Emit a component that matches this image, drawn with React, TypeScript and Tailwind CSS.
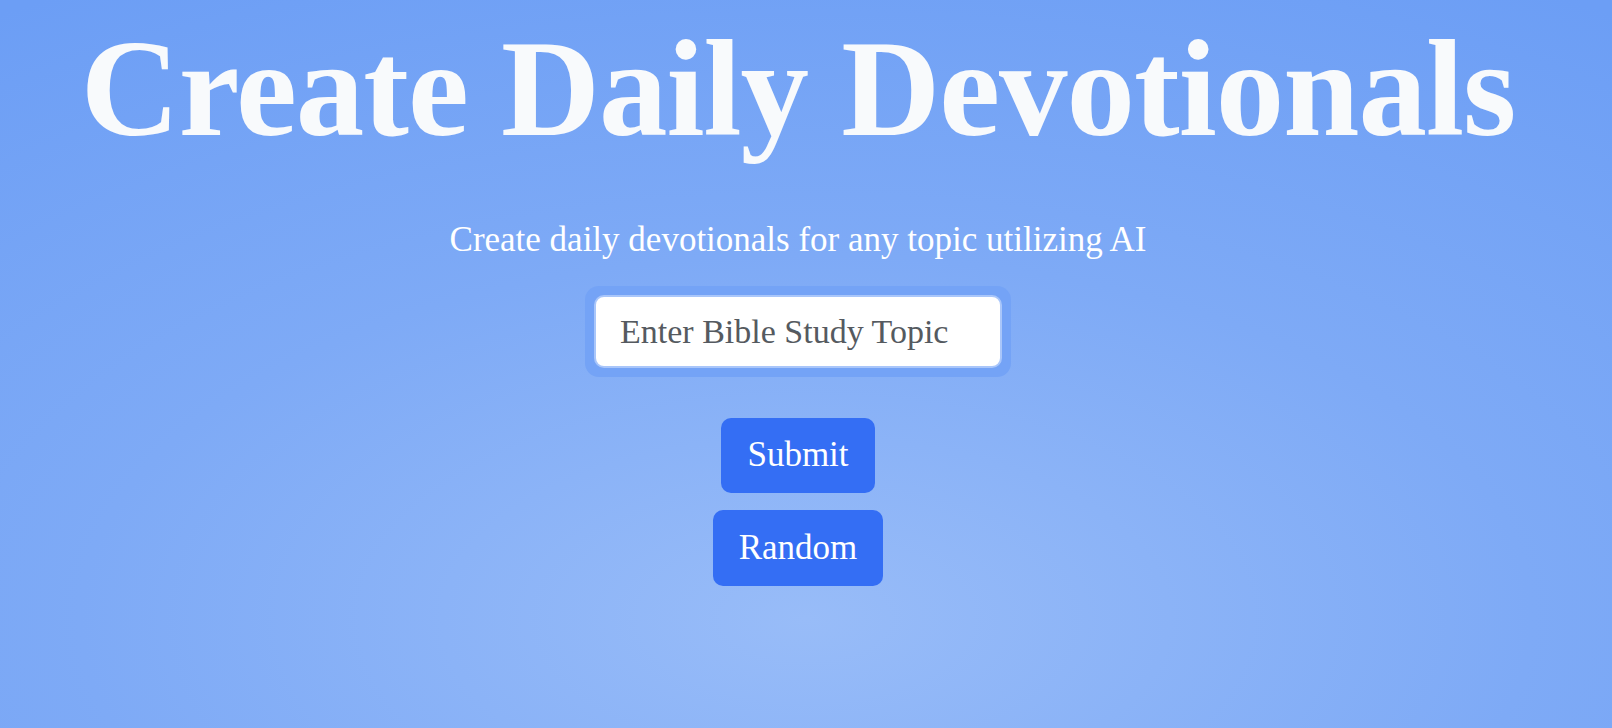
import { useState } from "react";

export default function App() {
  const [topic, setTopic] = useState("");

  return (
    <div className="min-h-screen w-full bg-[radial-gradient(ellipse_90%_100%_at_50%_85%,#98bcf8_0%,#7eaaf6_50%,#6c9ef5_100%)] font-['Liberation_Serif',serif]">
      <div className="flex flex-col items-center pr-[16px]">
        <h1 className="mt-[9px] text-[137px] leading-[160px] font-bold tracking-[-1px] text-[#f8fafc]">
          Create Daily Devotionals
        </h1>
        <p className="mt-[51px] text-[35px] leading-[40px] text-white">
          Create daily devotionals for any topic utilizing AI
        </p>
        <div className="mt-[26px] rounded-[14px] bg-[#74a3f6] p-[9px]">
          <input
            autoFocus
            value={topic}
            onChange={(e) => setTopic(e.target.value)}
            placeholder="Enter Bible Study Topic"
            className="h-[73px] w-[408px] rounded-[10px] border-2 border-[#a9c6fa] bg-white px-[24px] text-[34px] text-[#555] caret-black outline-none placeholder:text-[#555a60]"
          />
        </div>
        <button className="mt-[41px] h-[75px] rounded-[10px] bg-[#346ef4] px-[26px] text-[35px] text-white">
          Submit
        </button>
        <button className="mt-[17px] h-[76px] rounded-[10px] bg-[#346ef4] px-[26px] text-[35px] text-white">
          Random
        </button>
      </div>
    </div>
  );
}
